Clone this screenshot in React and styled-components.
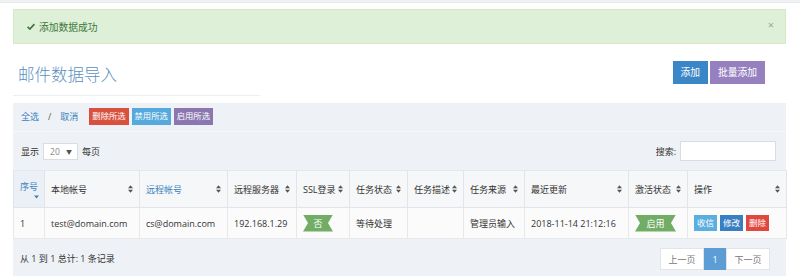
import styled, {createGlobalStyle} from 'styled-components';

const GlobalStyle = createGlobalStyle`
    html, body {
        margin: 0;
        padding: 0;
        background: #fff;
        font-family: 'Open Sans', 'Noto Sans CJK SC', sans-serif;
        color: #333;
    }
    * {
        box-sizing: border-box;
    }
`;

const TopStrip = styled.div`
    height: 3px;
    background: #f0f1f3;
    border-bottom: 1px solid #e9ebee;
`;
const Page = styled.div`
    padding: 6px 14px 0 13px;
`;
const Alert = styled.div`
    display: flex;
    align-items: center;
    height: 35px;
    padding: 0 11px 0 13px;
    background: #dff0d8;
    border: 1px solid #d6e9c6;
    color: #3c763d;
    font-size: 9.75px;

    span {
        flex: 1;
        margin-left: 4px;
    }
`;
const Close = styled.div`
    color: #9aa69a;
    font-size: 11px;
    margin-top: -4px;
`;
const Head = styled.div`
    display: flex;
    justify-content: space-between;
    align-items: flex-start;
    height: 59px;
`;
const TitleWrap = styled.div`
    width: 247px;
    height: 52px;
    padding: 21px 0 0 5px;
    border-bottom: 1px solid #eceef1;
`;
const Title = styled.h1`
    margin: 0;
    font-size: 16.5px;
    line-height: 20px;
    font-weight: 300;
    color: #5b8fbf;
`;
const HeadActions = styled.div`
    display: flex;
    gap: 2px;
    margin: 17px 21px 0 0;
`;
const Btn = styled.button`
    height: ${(p) => p.$h || 23}px;
    padding: 0 ${(p) => p.$px ?? 8}px;
    border: none;
    background: ${(p) => p.$bg};
    color: #fff;
    font-family: inherit;
    font-size: ${(p) => p.$fs || 9.75}px;
    line-height: 1;
    cursor: pointer;
`;
const Panel = styled.div`
    background: #eef1f5;
    height: 173px;
`;
const Toolbar = styled.div`
    display: flex;
    align-items: center;
    gap: 3px;
    height: 29px;
    padding: 0 0 1px 8px;
    border-bottom: 1px solid #f6f7f9;
    font-size: 9px;
`;
const Link = styled.a`
    color: #3a83c0;
    text-decoration: none;
`;
const Slash = styled.span`
    color: #555;
    margin: 0 6px;
`;
const Controls = styled.div`
    display: flex;
    align-items: center;
    justify-content: space-between;
    height: 38px;
    padding: 0 10px 0 8px;
    font-size: 9px;
`;
const Group = styled.div`
    display: flex;
    align-items: center;
    gap: 4px;
`;
const Select = styled.div`
    display: flex;
    align-items: center;
    justify-content: space-between;
    width: 35px;
    height: 17px;
    padding: 0 5px 0 6px;
    background: #fff;
    border: 1px solid #d9dde2;
    color: #888;
    font-size: 8.5px;

    i {
        font-style: normal;
        font-size: 6px;
        color: #555;
    }
`;
const SearchInput = styled.div`
    width: 96px;
    height: 20px;
    background: #fff;
    border: 1px solid #d9dde2;
`;
const Table = styled.table`
    width: 100%;
    table-layout: fixed;
    border-collapse: collapse;
    font-size: 9px;
`;
const Th = styled.th`
    height: 37px;
    padding: 0 6px;
    text-align: left;
    font-weight: 400;
    color: ${(p) => (p.$link ? '#3a83c0' : '#333')};
    background: ${(p) => (p.$sorted ? '#eaf0f6' : '#f6f7f8')};
    border: 1px solid #e1e4e8;
    border-top-color: #e6e8eb;
`;
const ThInner = styled.div`
    display: flex;
    align-items: center;
    justify-content: space-between;
`;
const ThStack = styled.div`
    display: flex;
    flex-direction: column;
    align-items: flex-start;
    line-height: 14px;

    svg {
        margin: 1px 0 0 14px;
    }
`;
const Td = styled.td`
    height: 31px;
    padding: 0 6px;
    background: #fbfbfc;
    border: 1px solid #e6e8eb;
    color: #333;
    white-space: nowrap;
`;
const Ribbon = styled.div`
    display: flex;
    align-items: center;
    justify-content: center;
    width: ${(p) => p.$w}px;
    height: 17px;
    background: #72ad66;
    color: #fff;
    font-size: 9px;
    clip-path: polygon(0 0, 100% 0, calc(100% - 5px) 50%, 100% 100%, 0 100%, 5px 50%);
`;
const OpGroup = styled.div`
    display: flex;
    gap: 3px;
`;
const Footer = styled.div`
    display: flex;
    align-items: center;
    justify-content: space-between;
    height: 38px;
    padding: 0 16px 0 7px;
    font-size: 9px;
    color: #333;
`;
const Pager = styled.div`
    display: flex;
    margin-top: 2px;
`;
const PageBtn = styled.div`
    display: flex;
    align-items: center;
    justify-content: center;
    width: ${(p) => p.$w}px;
    height: 22px;
    background: ${(p) => (p.$active ? '#5b9dd4' : '#fff')};
    color: ${(p) => (p.$active ? '#fff' : '#777')};
    border: 1px solid ${(p) => (p.$active ? '#5b9dd4' : '#e1e4e8')};
    font-size: 9px;
`;

const Check = () => (
    <svg width='8' height='7' viewBox='0 0 8 7'>
        <path d='M0.6 3.8 L2.9 6 L7.4 1.2' fill='none' stroke='#3c763d' strokeWidth='1.7' />
    </svg>
);

const SortIcon = () => (
    <svg width='5' height='8' viewBox='0 0 5 8'>
        <path d='M0 3.2 L2.5 0.2 L5 3.2 Z M0 4.8 L2.5 7.8 L5 4.8 Z' fill='#555' />
    </svg>
);

const SortDesc = () => (
    <svg width='5' height='4' viewBox='0 0 5 4'>
        <path d='M0 0.5 L5 0.5 L2.5 3.5 Z' fill='#3a83c0' />
    </svg>
);

const cols = [31, 95, 88, 69, 53, 58, 56, 61, 104, 59, 99];
const headers = [
    {t: '本地帐号'},
    {t: '远程帐号', link: true},
    {t: '远程服务器'},
    {t: 'SSL登录'},
    {t: '任务状态'},
    {t: '任务描述'},
    {t: '任务来源'},
    {t: '最近更新'},
    {t: '激活状态'},
    {t: '操作'},
];

export default function App() {
    return (
        <>
            <GlobalStyle />
            <TopStrip />
            <Page>
                <Alert>
                    <Check />
                    <span>添加数据成功</span>
                    <Close>×</Close>
                </Alert>
                <Head>
                    <TitleWrap>
                        <Title>邮件数据导入</Title>
                    </TitleWrap>
                    <HeadActions>
                        <Btn $bg='#3b86c6'>添加</Btn>
                        <Btn $bg='#9680c0'>批量添加</Btn>
                    </HeadActions>
                </Head>
                <Panel>
                    <Toolbar>
                        <Link>全选</Link>
                        <Slash>/</Slash>
                        <Link>取消</Link>
                        <Btn $bg='#d9503f' $h={17} $px={3} $fs={8.3} style={{marginLeft: 8}}>
                            删除所选
                        </Btn>
                        <Btn $bg='#56a9dc' $h={17} $px={3} $fs={8.3}>
                            禁用所选
                        </Btn>
                        <Btn $bg='#8a77b0' $h={17} $px={3} $fs={8.3}>
                            启用所选
                        </Btn>
                    </Toolbar>
                    <Controls>
                        <Group>
                            <span>显示</span>
                            <Select>
                                20 <i>▼</i>
                            </Select>
                            <span>每页</span>
                        </Group>
                        <Group>
                            <span>搜索:</span>
                            <SearchInput />
                        </Group>
                    </Controls>
                    <Table>
                        <colgroup>
                            {cols.map((w, i) => (
                                <col key={i} width={w} />
                            ))}
                        </colgroup>
                        <thead>
                            <tr>
                                <Th $sorted $link>
                                    <ThStack>
                                        序号
                                        <SortDesc />
                                    </ThStack>
                                </Th>
                                {headers.map((h) => (
                                    <Th key={h.t} $link={h.link}>
                                        <ThInner>
                                            {h.t}
                                            <SortIcon />
                                        </ThInner>
                                    </Th>
                                ))}
                            </tr>
                        </thead>
                        <tbody>
                            <tr>
                                <Td>1</Td>
                                <Td>test@domain.com</Td>
                                <Td>cs@domain.com</Td>
                                <Td>192.168.1.29</Td>
                                <Td>
                                    <Ribbon $w={30}>否</Ribbon>
                                </Td>
                                <Td>等待处理</Td>
                                <Td></Td>
                                <Td>管理员输入</Td>
                                <Td>2018-11-14 21:12:16</Td>
                                <Td>
                                    <Ribbon $w={41}>启用</Ribbon>
                                </Td>
                                <Td>
                                    <OpGroup>
                                        <Btn $bg='#5aaee0' $h={16} $px={3} $fs={8.5}>收信</Btn>
                                        <Btn $bg='#3a7ec2' $h={16} $px={3} $fs={8.5}>修改</Btn>
                                        <Btn $bg='#e0483f' $h={16} $px={3} $fs={8.5}>删除</Btn>
                                    </OpGroup>
                                </Td>
                            </tr>
                        </tbody>
                    </Table>
                    <Footer>
                        <span>从 1 到 1 总计: 1 条记录</span>
                        <Pager>
                            <PageBtn $w={44}>上一页</PageBtn>
                            <PageBtn $w={22} $active>1</PageBtn>
                            <PageBtn $w={44}>下一页</PageBtn>
                        </Pager>
                    </Footer>
                </Panel>
            </Page>
        </>
    );
}
